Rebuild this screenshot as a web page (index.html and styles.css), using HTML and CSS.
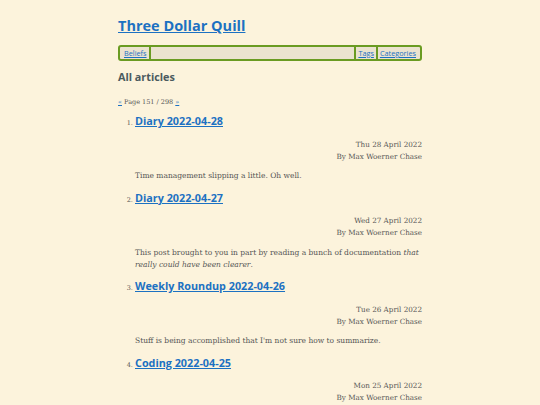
FILE: index.html
```html
<!DOCTYPE html>
<html>
<head>
<meta charset="utf-8">
<link rel="stylesheet" href="styles.css">
</head>
<body>
<div class="page">
  <header class="site-header">
    <h1 class="site-title"><a href="#">Three Dollar Quill</a></h1>
    <nav class="nav">
      <div class="nav-group">
        <a class="nav-link sep-right" href="#">Beliefs</a>
      </div>
      <div class="nav-group">
        <a class="nav-link sep-left sep-right" href="#">Tags</a>
        <a class="nav-link" href="#">Categories</a>
      </div>
    </nav>
  </header>
  <main>
    <h2 class="section-title">All articles</h2>
    <p class="pager"><a href="#">«</a> Page 151 / 298 <a href="#">»</a></p>
    <ol class="articles">
      <li class="article">
        <h3 class="article-title"><a href="#">Diary 2022-04-28</a></h3>
        <div class="meta">
          <div>Thu 28 April 2022</div>
          <div>By Max Woerner Chase</div>
        </div>
        <p class="summary">Time management slipping a little. Oh well.</p>
      </li>
      <li class="article">
        <h3 class="article-title"><a href="#">Diary 2022-04-27</a></h3>
        <div class="meta">
          <div>Wed 27 April 2022</div>
          <div>By Max Woerner Chase</div>
        </div>
        <p class="summary">This post brought to you in part by reading a bunch of documentation <em>that really could have been clearer</em>.</p>
      </li>
      <li class="article">
        <h3 class="article-title"><a href="#">Weekly Roundup 2022-04-26</a></h3>
        <div class="meta">
          <div>Tue 26 April 2022</div>
          <div>By Max Woerner Chase</div>
        </div>
        <p class="summary">Stuff is being accomplished that I'm not sure how to summarize.</p>
      </li>
      <li class="article">
        <h3 class="article-title"><a href="#">Coding 2022-04-25</a></h3>
        <div class="meta">
          <div>Mon 25 April 2022</div>
          <div>By Max Woerner Chase</div>
        </div>
      </li>
    </ol>
  </main>
</div>
</body>
</html>
```
FILE: styles.css
```css
html, body {
  margin: 0;
  padding: 0;
}
body {
  background: #fcf3dc;
  color: #555555;
  font-family: "DejaVu Serif", serif;
  font-size: 8px;
}
.page {
  width: 304px;
  margin: 0 auto;
  padding-top: 14px;
}
a {
  color: #1c71c2;
}
.site-title {
  font-family: "Open Sans", sans-serif;
  font-weight: 700;
  font-size: 14.5px;
  line-height: 24px;
  margin: 0 0 7px 0;
}
.nav {
  display: flex;
  justify-content: space-between;
  border: 2px solid #6a9b22;
  border-radius: 3px;
  background: #ebe3cf;
  height: 12px;
  padding: 0 2px;
  font-family: "Open Sans", sans-serif;
  font-size: 7.3px;
  line-height: 12px;
}
.nav-group {
  display: flex;
}
.nav-link {
  padding: 0 2px;
}
.sep-right {
  border-right: 2px solid #6a9b22;
}
.sep-left {
  border-left: 2px solid #6a9b22;
}
.section-title {
  font-family: "Open Sans", sans-serif;
  font-weight: 700;
  font-size: 10.8px;
  color: #4b5a5e;
  margin: 6px 0 0 0;
  line-height: 20px;
}
.pager {
  font-size: 6.5px;
  margin: 9px 0 0 0;
  line-height: 12px;
}
.articles {
  margin: 5px 0 0 0;
  padding-left: 17px;
  font-size: 6.5px;
}
.article-title {
  font-family: "Open Sans", sans-serif;
  font-weight: 700;
  font-size: 10.8px;
  line-height: 16px;
  margin: 0;
}
.meta {
  text-align: right;
  font-size: 7.2px;
  line-height: 12px;
  margin-top: 9.5px;
}
.summary {
  font-size: 7.5px;
  line-height: 12px;
  margin: 7.5px 0 7.5px 0;
}
```
